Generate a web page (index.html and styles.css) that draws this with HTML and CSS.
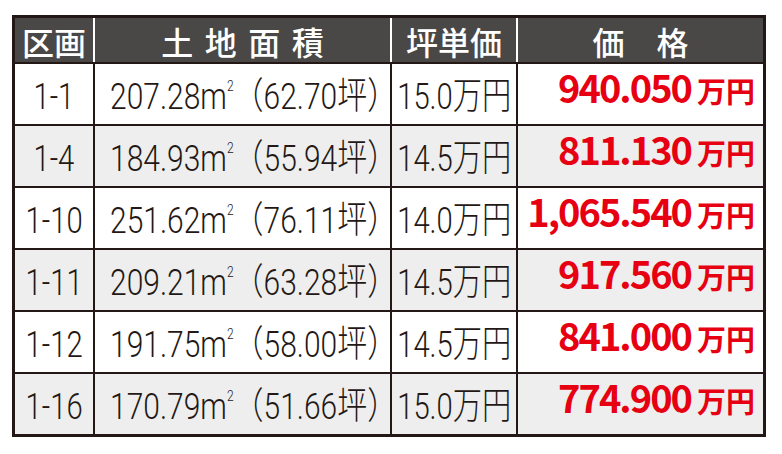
FILE: index.html
```html
<!DOCTYPE html>
<html lang="ja">
<head>
    <meta charset="UTF-8">
    <meta name="viewport" content="width=device-width, initial-scale=1.0">
    <title>区画 価格表</title>
    <link rel="stylesheet" href="styles.css">
</head>
<body>
    <div class="price-table">
        <div class="row head">
            <div class="cell">区画</div>
            <div class="cell spaced">土地面積</div>
            <div class="cell">坪単価</div>
            <div class="cell">価　格</div>
        </div>

        <div class="row">
            <div class="cell"><span class="txt">1-1</span></div>
            <div class="cell"><span class="txt area">207.28m<sup>2</sup>（62.70坪）</span></div>
            <div class="cell"><span class="txt">15.0万円</span></div>
            <div class="cell price"><span class="num">940.050</span><span class="yen">万円</span></div>
        </div>
        <div class="row alt">
            <div class="cell"><span class="txt">1-4</span></div>
            <div class="cell"><span class="txt area">184.93m<sup>2</sup>（55.94坪）</span></div>
            <div class="cell"><span class="txt">14.5万円</span></div>
            <div class="cell price"><span class="num">811.130</span><span class="yen">万円</span></div>
        </div>
        <div class="row">
            <div class="cell"><span class="txt">1-10</span></div>
            <div class="cell"><span class="txt area">251.62m<sup>2</sup>（76.11坪）</span></div>
            <div class="cell"><span class="txt">14.0万円</span></div>
            <div class="cell price"><span class="num">1,065.540</span><span class="yen">万円</span></div>
        </div>
        <div class="row alt">
            <div class="cell"><span class="txt">1-11</span></div>
            <div class="cell"><span class="txt area">209.21m<sup>2</sup>（63.28坪）</span></div>
            <div class="cell"><span class="txt">14.5万円</span></div>
            <div class="cell price"><span class="num">917.560</span><span class="yen">万円</span></div>
        </div>
        <div class="row">
            <div class="cell"><span class="txt">1-12</span></div>
            <div class="cell"><span class="txt area">191.75m<sup>2</sup>（58.00坪）</span></div>
            <div class="cell"><span class="txt">14.5万円</span></div>
            <div class="cell price"><span class="num">841.000</span><span class="yen">万円</span></div>
        </div>
        <div class="row alt">
            <div class="cell"><span class="txt">1-16</span></div>
            <div class="cell"><span class="txt area">170.79m<sup>2</sup>（51.66坪）</span></div>
            <div class="cell"><span class="txt">15.0万円</span></div>
            <div class="cell price"><span class="num">774.900</span><span class="yen">万円</span></div>
        </div>
    </div>
</body>
</html>
```

FILE: styles.css
```css
* {
    margin: 0;
    padding: 0;
    box-sizing: border-box;
}

body {
    font-family: "Noto Sans CJK JP", sans-serif;
    background: #fff;
    color: #231815;
    overflow: hidden;
}

.price-table {
    width: 754px;
    margin: 15px 0 0 12px;
    border: 3px solid #231815;
    display: grid;
    grid-template-columns: 78px 297px 126px 247px;
}

.row {
    display: contents;
}

.cell {
    height: 62px;
    border-top: 2px solid #231815;
    border-left: 2px solid #231815;
    background: #fff;
    display: flex;
    align-items: center;
    justify-content: center;
    white-space: nowrap;
    line-height: 1;
}

.cell:first-child {
    border-left: none;
}

.alt .cell {
    background: #edeeed;
}

/* header */
.head .cell {
    height: 44px;
    border-top: none;
    border-left-color: #fff;
    background: #4a4846;
    color: #fff;
    font-size: 32px;
    font-weight: 500;
    padding-top: 2px;
}

.head .cell:first-child {
    border-left: none;
}

.head .spaced {
    letter-spacing: 0.36em;
    padding-left: 0.36em;
}

/* body text, condensed */
.txt {
    display: inline-block;
    font-family: Roboto, "Noto Sans CJK JP", sans-serif;
    font-size: 37px;
    font-weight: 300;
    transform: scaleX(0.79);
    padding-top: 4px;
}

.txt.area {
    transform: scaleX(0.81);
    padding-left: 28px;
}

.txt sup {
    font-size: 0.4em;
    vertical-align: 1.25em;
}

.price {
    justify-content: flex-end;
    padding-right: 8px;
    color: #e60012;
    font-weight: 700;
    align-items: baseline;
    padding-top: 4px;
}

.price .num {
    display: inline-block;
    font-size: 38px;
    letter-spacing: -2px;
}

.price .yen {
    font-size: 29px;
    margin-left: 6px;
}
```
